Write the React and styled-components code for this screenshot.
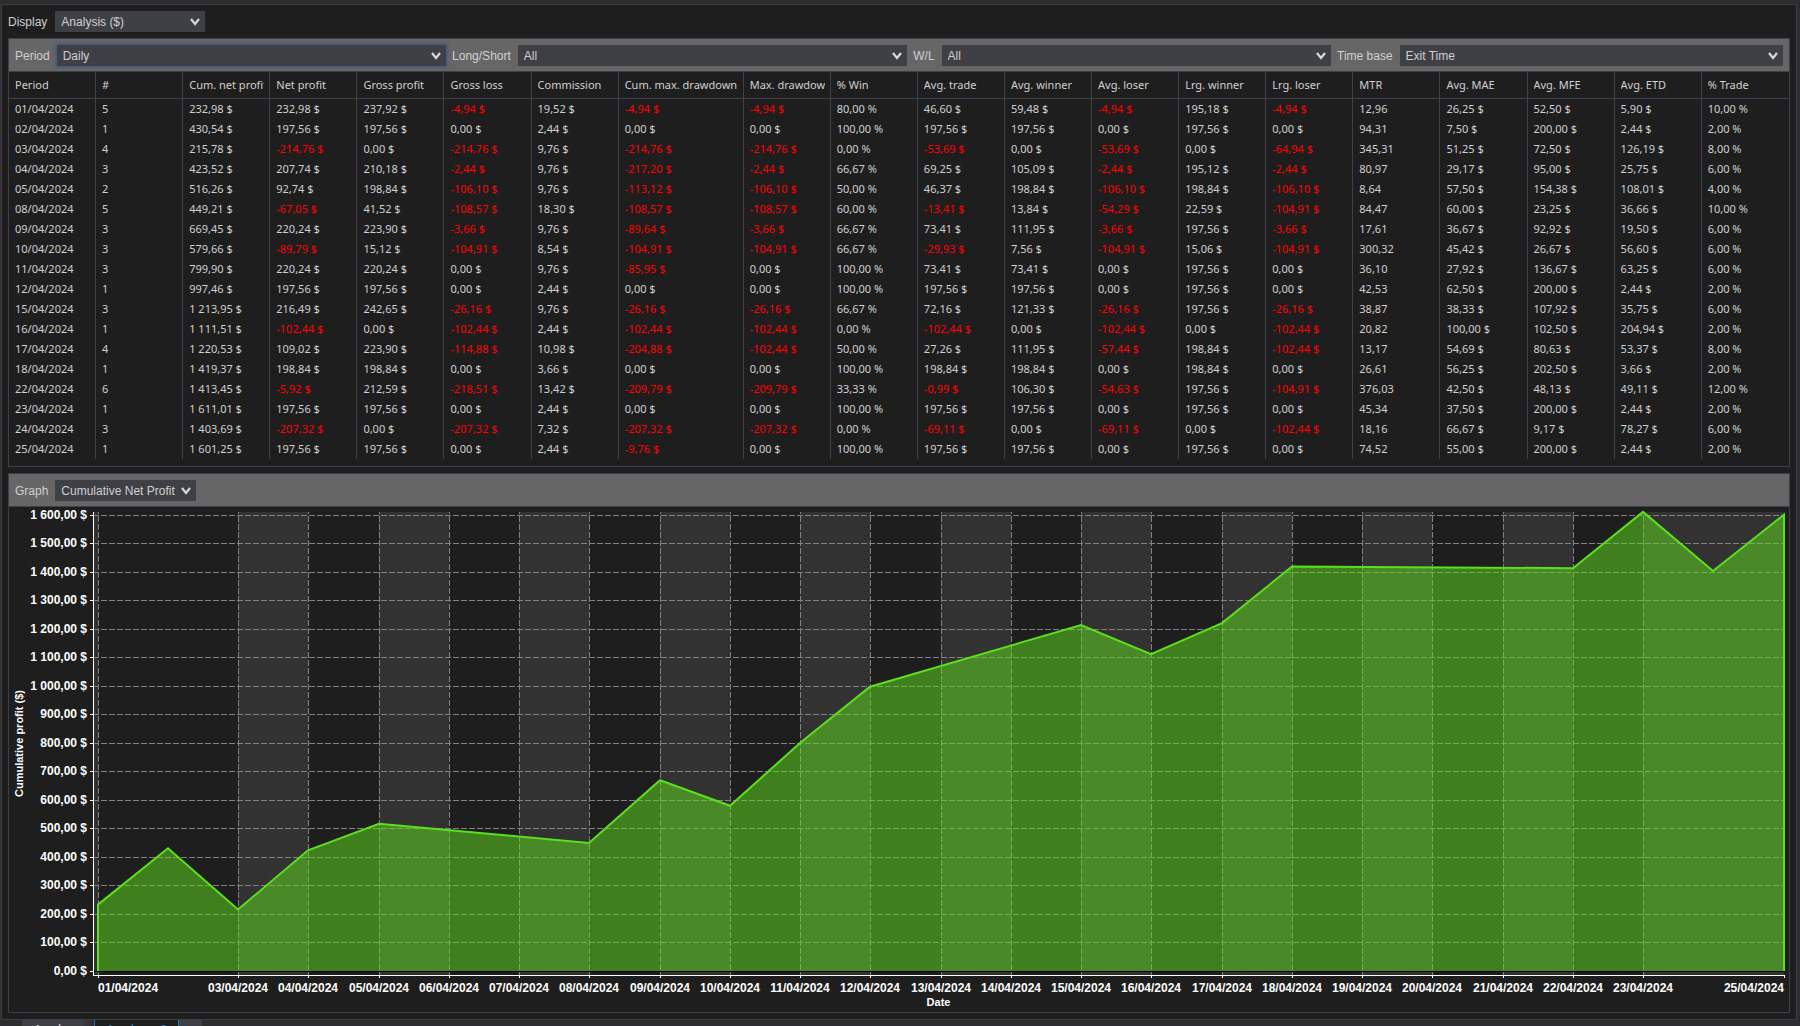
import React, { useLayoutEffect, useRef, useState } from "react";
import styled, { createGlobalStyle, css } from "styled-components";

const GlobalStyle = createGlobalStyle`
  * {
    box-sizing: border-box;
  }

  body {
    margin: 0;
    background: #2d2d30;
    color: #d0d0d0;
    font-family: "Liberation Sans", Arial, sans-serif;
    font-size: 12px;
  }
`;

const columns = [
  "Period",
  "#",
  "Cum. net profit",
  "Net profit",
  "Gross profit",
  "Gross loss",
  "Commission",
  "Cum. max. drawdown",
  "Max. drawdown",
  "% Win",
  "Avg. trade",
  "Avg. winner",
  "Avg. loser",
  "Lrg. winner",
  "Lrg. loser",
  "MTR",
  "Avg. MAE",
  "Avg. MFE",
  "Avg. ETD",
  "% Trade",
];

const rows = `
01/04/2024|5|232,98 $|232,98 $|237,92 $|-4,94 $|19,52 $|-4,94 $|-4,94 $|80,00 %|46,60 $|59,48 $|-4,94 $|195,18 $|-4,94 $|12,96|26,25 $|52,50 $|5,90 $|10,00 %
02/04/2024|1|430,54 $|197,56 $|197,56 $|0,00 $|2,44 $|0,00 $|0,00 $|100,00 %|197,56 $|197,56 $|0,00 $|197,56 $|0,00 $|94,31|7,50 $|200,00 $|2,44 $|2,00 %
03/04/2024|4|215,78 $|-214,76 $|0,00 $|-214,76 $|9,76 $|-214,76 $|-214,76 $|0,00 %|-53,69 $|0,00 $|-53,69 $|0,00 $|-64,94 $|345,31|51,25 $|72,50 $|126,19 $|8,00 %
04/04/2024|3|423,52 $|207,74 $|210,18 $|-2,44 $|9,76 $|-217,20 $|-2,44 $|66,67 %|69,25 $|105,09 $|-2,44 $|195,12 $|-2,44 $|80,97|29,17 $|95,00 $|25,75 $|6,00 %
05/04/2024|2|516,26 $|92,74 $|198,84 $|-106,10 $|9,76 $|-113,12 $|-106,10 $|50,00 %|46,37 $|198,84 $|-106,10 $|198,84 $|-106,10 $|8,64|57,50 $|154,38 $|108,01 $|4,00 %
08/04/2024|5|449,21 $|-67,05 $|41,52 $|-108,57 $|18,30 $|-108,57 $|-108,57 $|60,00 %|-13,41 $|13,84 $|-54,29 $|22,59 $|-104,91 $|84,47|60,00 $|23,25 $|36,66 $|10,00 %
09/04/2024|3|669,45 $|220,24 $|223,90 $|-3,66 $|9,76 $|-89,64 $|-3,66 $|66,67 %|73,41 $|111,95 $|-3,66 $|197,56 $|-3,66 $|17,61|36,67 $|92,92 $|19,50 $|6,00 %
10/04/2024|3|579,66 $|-89,79 $|15,12 $|-104,91 $|8,54 $|-104,91 $|-104,91 $|66,67 %|-29,93 $|7,56 $|-104,91 $|15,06 $|-104,91 $|300,32|45,42 $|26,67 $|56,60 $|6,00 %
11/04/2024|3|799,90 $|220,24 $|220,24 $|0,00 $|9,76 $|-85,95 $|0,00 $|100,00 %|73,41 $|73,41 $|0,00 $|197,56 $|0,00 $|36,10|27,92 $|136,67 $|63,25 $|6,00 %
12/04/2024|1|997,46 $|197,56 $|197,56 $|0,00 $|2,44 $|0,00 $|0,00 $|100,00 %|197,56 $|197,56 $|0,00 $|197,56 $|0,00 $|42,53|62,50 $|200,00 $|2,44 $|2,00 %
15/04/2024|3|1 213,95 $|216,49 $|242,65 $|-26,16 $|9,76 $|-26,16 $|-26,16 $|66,67 %|72,16 $|121,33 $|-26,16 $|197,56 $|-26,16 $|38,87|38,33 $|107,92 $|35,75 $|6,00 %
16/04/2024|1|1 111,51 $|-102,44 $|0,00 $|-102,44 $|2,44 $|-102,44 $|-102,44 $|0,00 %|-102,44 $|0,00 $|-102,44 $|0,00 $|-102,44 $|20,82|100,00 $|102,50 $|204,94 $|2,00 %
17/04/2024|4|1 220,53 $|109,02 $|223,90 $|-114,88 $|10,98 $|-204,88 $|-102,44 $|50,00 %|27,26 $|111,95 $|-57,44 $|198,84 $|-102,44 $|13,17|54,69 $|80,63 $|53,37 $|8,00 %
18/04/2024|1|1 419,37 $|198,84 $|198,84 $|0,00 $|3,66 $|0,00 $|0,00 $|100,00 %|198,84 $|198,84 $|0,00 $|198,84 $|0,00 $|26,61|56,25 $|202,50 $|3,66 $|2,00 %
22/04/2024|6|1 413,45 $|-5,92 $|212,59 $|-218,51 $|13,42 $|-209,79 $|-209,79 $|33,33 %|-0,99 $|106,30 $|-54,63 $|197,56 $|-104,91 $|376,03|42,50 $|48,13 $|49,11 $|12,00 %
23/04/2024|1|1 611,01 $|197,56 $|197,56 $|0,00 $|2,44 $|0,00 $|0,00 $|100,00 %|197,56 $|197,56 $|0,00 $|197,56 $|0,00 $|45,34|37,50 $|200,00 $|2,44 $|2,00 %
24/04/2024|3|1 403,69 $|-207,32 $|0,00 $|-207,32 $|7,32 $|-207,32 $|-207,32 $|0,00 %|-69,11 $|0,00 $|-69,11 $|0,00 $|-102,44 $|18,16|66,67 $|9,17 $|78,27 $|6,00 %
25/04/2024|1|1 601,25 $|197,56 $|197,56 $|0,00 $|2,44 $|-9,76 $|0,00 $|100,00 %|197,56 $|197,56 $|0,00 $|197,56 $|0,00 $|74,52|55,00 $|200,00 $|2,44 $|2,00 %
`
  .trim()
  .split("\n")
  .map((line) => line.split("|"));

const points = rows.map((row) => ({
  day: parseInt(row[0], 10) - 1,
  value: parseFloat(row[2].replace(/[ $]/g, "").replace(",", ".")),
}));

const Page = styled.div`
  display: flex;
  flex-direction: column;
  min-height: 100vh;
  padding: 4px 3px 0 1px;
`;

const Window = styled.main`
  display: flex;
  flex: 1;
  flex-direction: column;
  padding: 0 6px 6px;
  border: 1px solid #3f3f46;
  background: #1e1e1e;
`;

const DisplayBar = styled.div`
  display: flex;
  align-items: center;
  gap: 8px;
  padding: 6px 0;
`;

const Panel = styled.section`
  display: flex;
  flex-direction: column;
  border: 1px solid #3f3f46;

  & + & {
    flex: 1;
    margin-top: 6px;
  }
`;

const Toolbar = styled.div`
  display: flex;
  align-items: center;
  gap: 7px;
  height: 33px;
  padding: 1px 6px 0;
  border-bottom: 1px solid #3f3f46;
  background: #666666;
`;

const FilterBar = styled(Toolbar)`
  display: grid;
  grid-template-columns: repeat(4, auto minmax(0, 1fr));
  gap: 0;
  padding: 1px 0 0;

  label {
    margin: 0 7px 0 6px;
  }

  & > :last-child {
    margin-right: 6px;
  }
`;

const SelectBox = styled.div`
  display: grid;
  align-items: center;
  width: ${({ $width }) => ($width ? `${$width}px` : "auto")};
  background: #3f3f46;

  ${({ $active }) =>
    $active &&
    css`
      box-shadow: 0 0 3px 1px #35548f;
    `}

  select {
    grid-area: 1 / 1;
    width: 100%;
    height: 21px;
    padding: 0 20px 0 6px;
    border: 0;
    border-radius: 0;
    outline: 0;
    background: transparent;
    color: #d0d0d0;
    font: inherit;
    appearance: none;
  }

  svg {
    grid-area: 1 / 1;
    justify-self: end;
    margin-right: 5px;
    pointer-events: none;
  }
`;

const TableWrap = styled.div`
  padding-bottom: 7px;
`;

const Table = styled.table`
  width: 100%;
  border-collapse: separate;
  border-spacing: 0;
  table-layout: fixed;
  font-family: "Noto Sans", "Open Sans", sans-serif;
  font-size: 11px;
  line-height: 20px;

  .wide {
    width: 125px;
  }
`;

const HeadCell = styled.th`
  height: 27px;
  padding: 0 5px 0 6px;
  border-right: 1px solid #3f3f46;
  border-bottom: 1px solid #3f3f46;
  font-weight: 400;
  text-align: left;

  &:last-child {
    border-right: 0;
  }

  span {
    display: block;
    overflow: hidden;
    white-space: nowrap;
  }
`;

const Cell = styled.td`
  height: 20px;
  padding: 0 0 0 6px;
  border-right: 1px solid #3f3f46;
  color: ${({ $negative }) => ($negative ? "#ff0000" : "#d0d0d0")};
  white-space: nowrap;

  &:last-child {
    border-right: 0;
  }
`;

const ChartArea = styled.div`
  position: relative;
  flex: 1;
  min-height: 300px;
`;

const ChartSvg = styled.svg`
  position: absolute;
  inset: 0;
  width: 100%;
  height: 100%;

  text {
    fill: #ffffff;
    font-size: 12px;
    font-weight: 700;
  }

  .title {
    font-size: 11px;
  }
`;

const Tabs = styled.nav`
  display: flex;
  height: 6px;
  padding-left: 21px;
  overflow: hidden;
`;

const Tab = styled.button`
  flex: none;
  width: ${({ $width }) => $width}px;
  height: 20px;
  padding: 0;
  border: 0;
  background: linear-gradient(90deg, #3f3f46 80%, #2d2d30);
  color: #d0d0d0;
  font: inherit;
  font-size: 14px;
  line-height: 18px;

  ${({ $active }) =>
    $active &&
    css`
      border: solid #1c7ac4;
      border-width: 0 1px;
      background: #1e1e1e;
      color: #1c7ac4;
    `}

  ${({ $plain }) =>
    $plain &&
    css`
      background: #3f3f46;
    `}
`;

const Select = ({ id, value, width, active }) => (
  <SelectBox $width={width} $active={active}>
    <select id={id} defaultValue={value}>
      <option>{value}</option>
    </select>
    <svg width="10" height="8" viewBox="0 0 10 8" fill="none">
      <path d="M1 1L5 6L9 1" stroke="#d8d8d8" strokeWidth="2.2" />
    </svg>
  </SelectBox>
);

const Chart = () => {
  const ref = useRef(null);
  const [size, setSize] = useState({ width: 1780, height: 505 });

  useLayoutEffect(() => {
    const measure = () =>
      setSize({
        width: ref.current.clientWidth,
        height: ref.current.clientHeight,
      });
    measure();
    const observer = new ResizeObserver(measure);
    observer.observe(ref.current);
    return () => observer.disconnect();
  }, []);

  const { width, height } = size;
  const axisX = 84;
  const left = 89;
  const right = width - 5;
  const top = 5;
  const axisY = height - 37;
  const zeroY = axisY - 4;

  const x = (day) => Math.floor(left + (day * (right - left)) / 24);
  const y = (value) => zeroY - (value * (zeroY - 8)) / 1600;

  const line = points.map((p) => `${x(p.day)},${y(p.value)}`).join(" ");
  const area = `${x(0)},${zeroY} ${line} ${x(24)},${zeroY}`;
  const gridDays = [0, ...Array.from({ length: 21 }, (_, i) => i + 2)];
  const bands = Array.from({ length: 11 }, (_, i) => 2 + i * 2);
  const levels = Array.from({ length: 17 }, (_, i) => i * 100);

  const dateLabel = (day) => `${String(day + 1).padStart(2, "0")}/04/2024`;
  const moneyLabel = (value) =>
    `${value >= 1000 ? "1 " : ""}${
      value >= 1000 ? String(value).slice(1) : value
    },00 $`;
  const anchor = (day) =>
    day === 0 ? "start" : day === 24 ? "end" : "middle";

  return (
    <ChartArea ref={ref}>
      <ChartSvg>
        <g fill="#323232">
          <rect x={axisX} y={top} width={left - axisX} height={axisY - top} />
          {bands.map((day) => (
            <rect
              key={day}
              x={x(day)}
              y={top}
              width={x(day === 22 ? 24 : day + 1) - x(day)}
              height={axisY - top}
            />
          ))}
        </g>

        <g stroke="#808080" shapeRendering="crispEdges">
          {gridDays.map((day) => (
            <line
              key={day}
              x1={x(day) + 0.5}
              x2={x(day) + 0.5}
              y1={axisY + 3}
              y2={top}
              strokeDasharray="6 2"
            />
          ))}
          {levels.map((value) => (
            <line
              key={value}
              x1={axisX}
              x2={right}
              y1={Math.floor(y(value)) + 0.5}
              y2={Math.floor(y(value)) + 0.5}
              strokeDasharray="6 2"
            />
          ))}
        </g>

        <polygon points={area} fill="#60e01e" fillOpacity="0.5" />
        <polyline points={area} fill="none" stroke="#5cdf1c" strokeWidth="2" />

        <g shapeRendering="crispEdges" stroke="#ffffff">
          <line
            x1={left - 5}
            x2={right}
            y1={zeroY + 0.5}
            y2={zeroY + 0.5}
            stroke="#000000"
          />
          <line x1={axisX + 0.5} x2={axisX + 0.5} y1={top} y2={axisY + 1} />
          <line x1={axisX} x2={right + 1} y1={axisY + 0.5} y2={axisY + 0.5} />
          {levels.map((value) => (
            <line
              key={value}
              x1={axisX - 3}
              x2={axisX}
              y1={Math.floor(y(value)) + 0.5}
              y2={Math.floor(y(value)) + 0.5}
            />
          ))}
          {[...gridDays, 24].map((day) => (
            <line
              key={day}
              x1={x(day) + 0.5}
              x2={x(day) + 0.5}
              y1={axisY}
              y2={axisY + 3}
            />
          ))}
        </g>

        {levels.map((value) => (
          <text
            key={value}
            x={axisX - 6}
            y={Math.floor(y(value)) + 4}
            textAnchor="end"
          >
            {moneyLabel(value)}
          </text>
        ))}
        {[...gridDays, 24].map((day) => (
          <text
            key={day}
            x={x(day)}
            y={axisY + 17}
            textAnchor={anchor(day)}
          >
            {dateLabel(day)}
          </text>
        ))}
        <text
          className="title"
          x={(axisX + right) / 2}
          y={axisY + 31}
          textAnchor="middle"
        >
          Date
        </text>
        <text
          className="title"
          transform={`translate(14 ${(top + axisY) / 2}) rotate(-90)`}
          textAnchor="middle"
        >
          Cumulative profit ($)
        </text>
      </ChartSvg>
    </ChartArea>
  );
};

const App = () => (
  <>
    <GlobalStyle />
    <Page>
      <Window>
        <DisplayBar>
          <label htmlFor="display">Display</label>
          <Select id="display" value="Analysis ($)" width={150} />
        </DisplayBar>

        <Panel>
          <FilterBar>
            <label htmlFor="period">Period</label>
            <Select id="period" value="Daily" active />
            <label htmlFor="side">Long/Short</label>
            <Select id="side" value="All" />
            <label htmlFor="result">W/L</label>
            <Select id="result" value="All" />
            <label htmlFor="time-base">Time base</label>
            <Select id="time-base" value="Exit Time" />
          </FilterBar>
          <TableWrap>
            <Table>
              <thead>
                <tr>
                  {columns.map((name) => (
                    <HeadCell
                      key={name}
                      className={
                        name === "Cum. max. drawdown" ? "wide" : undefined
                      }
                    >
                      <span>{name}</span>
                    </HeadCell>
                  ))}
                </tr>
              </thead>
              <tbody>
                {rows.map((row) => (
                  <tr key={row[0]}>
                    {row.map((value, i) => (
                      <Cell key={columns[i]} $negative={value[0] === "-"}>
                        {value}
                      </Cell>
                    ))}
                  </tr>
                ))}
              </tbody>
            </Table>
          </TableWrap>
        </Panel>

        <Panel>
          <Toolbar>
            <label htmlFor="graph">Graph</label>
            <Select id="graph" value="Cumulative Net Profit" width={141} />
          </Toolbar>
          <Chart />
        </Panel>
      </Window>

      <Tabs>
        <Tab $width={72}>Analyse</Tab>
        <Tab $width={85} $active>
          Analyse 2
        </Tab>
        <Tab $width={23} $plain aria-label="New tab" />
      </Tabs>
    </Page>
  </>
);

export default App;
